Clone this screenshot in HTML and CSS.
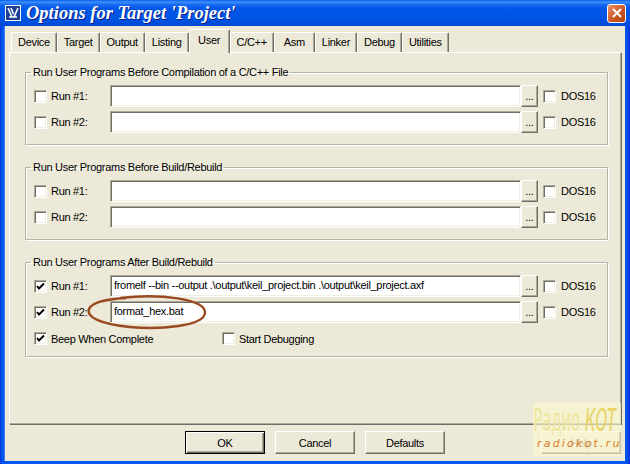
FILE: index.html
```html
<!DOCTYPE html>
<html lang="en">
<head>
  <meta charset="UTF-8" />
  <title>Options for Target 'Project'</title>
  <link rel="stylesheet" href="styles.css">
</head>
<body>

  <div class="window">

    <!-- Title bar -->
    <div class="titlebar">
      <svg class="app-icon" width="16" height="16" viewBox="0 0 16 16">
        <rect x="0.5" y="0.5" width="15" height="15" fill="#1c3f94" stroke="#ffffff" />
        <path d="M3 3 L7 12 M6 3 L8.5 9 M13 3 L9 12 M4 12 H12" stroke="#ffffff" stroke-width="1.6" fill="none" />
      </svg>
      <span class="title">Options for Target 'Project'</span>
      <span class="close-btn">
        <svg width="12" height="12" viewBox="0 0 12 12">
          <path d="M2 2 L10 10 M10 2 L2 10" stroke="#ffffff" stroke-width="2" />
        </svg>
      </span>
    </div>

    <div class="client">

      <!-- Tabs -->
      <ul class="tabs">
        <li>Device</li>
        <li>Target</li>
        <li>Output</li>
        <li>Listing</li>
        <li class="active">User</li>
        <li>C/C++</li>
        <li>Asm</li>
        <li>Linker</li>
        <li>Debug</li>
        <li>Utilities</li>
      </ul>

      <div class="panel">

        <fieldset class="group">
          <legend>Run User Programs Before Compilation of a C/C++ File</legend>
          <div class="row">
            <span class="check"></span><span class="run-label">Run #1:</span>
            <span class="field"></span><span class="browse">...</span>
            <span class="check"></span><span class="dos">DOS16</span>
          </div>
          <div class="row">
            <span class="check"></span><span class="run-label">Run #2:</span>
            <span class="field"></span><span class="browse">...</span>
            <span class="check"></span><span class="dos">DOS16</span>
          </div>
        </fieldset>

        <fieldset class="group">
          <legend>Run User Programs Before Build/Rebuild</legend>
          <div class="row">
            <span class="check"></span><span class="run-label">Run #1:</span>
            <span class="field"></span><span class="browse">...</span>
            <span class="check"></span><span class="dos">DOS16</span>
          </div>
          <div class="row">
            <span class="check"></span><span class="run-label">Run #2:</span>
            <span class="field"></span><span class="browse">...</span>
            <span class="check"></span><span class="dos">DOS16</span>
          </div>
        </fieldset>

        <fieldset class="group">
          <legend>Run User Programs After Build/Rebuild</legend>
          <div class="row">
            <span class="check checked"></span><span class="run-label">Run #1:</span>
            <span class="field">fromelf --bin --output .\output\keil_project.bin .\output\keil_project.axf</span><span class="browse">...</span>
            <span class="check"></span><span class="dos">DOS16</span>
          </div>
          <div class="row">
            <span class="check checked"></span><span class="run-label">Run #2:</span>
            <span class="field">format_hex.bat</span><span class="browse">...</span>
            <span class="check"></span><span class="dos">DOS16</span>
          </div>
          <div class="row options">
            <span class="option"><span class="check checked"></span>Beep When Complete</span>
            <span class="option"><span class="check"></span>Start Debugging</span>
          </div>
        </fieldset>

      </div>

      <!-- Dialog buttons -->
      <div class="buttons">
        <span class="btn default">OK</span>
        <span class="btn">Cancel</span>
        <span class="btn">Defaults</span>
        <span class="btn help">Help</span>
      </div>
    </div>

    <!-- Hand-drawn mark round the second command -->
    <svg class="annotation" width="630" height="464" viewBox="0 0 630 464">
      <path d="M120 298 C160 293 206 299 205 313 C204 326 160 330 130 327 C100 324 86 317 89 309 C92 301 110 299 126 298"
            fill="none" stroke="#9a4a20" stroke-width="2.5" />
    </svg>

    <!-- Site watermark -->
    <div class="watermark">
      <div class="wm-big"><span class="wm-radio">Радио</span> <span class="wm-kot">КОТ</span></div>
      <div class="wm-site">radiokot.ru</div>
    </div>
  </div>

</body>
</html>
```

FILE: styles.css
```css
/* Base */
body {
  margin: 0;
  font-family: 'Liberation Sans', Arial, sans-serif;
  font-size: 11px;
  letter-spacing: -0.3px;
  color: #000;
}

.window {
  position: relative;
  width: 630px;
  height: 464px;
  box-sizing: border-box;
  display: flex;
  flex-direction: column;
  background: linear-gradient(90deg, #0831d9 0, #0058ee 2px, #0058ee 626px, #0831d9 630px);
  overflow: hidden;
}

/* Title bar */
.titlebar {
  height: 26px;
  flex: none;
  display: flex;
  align-items: center;
  padding: 0 5px;
  background: linear-gradient(#0a5ef0 0, #3c8ff8 2px, #1467f0 5px, #0058e8 9px, #0054e3 19px, #0049d4 26px);
  color: #fff;
}

.app-icon {
  flex: none;
  margin-right: 5px;
}

.title {
  font-family: 'Liberation Serif', 'Times New Roman', serif;
  font-style: italic;
  font-weight: bold;
  font-size: 18.5px;
  letter-spacing: 0;
  text-shadow: 1px 1px 0 #0a1e8a;
}

.close-btn {
  margin-left: auto;
  width: 17px;
  height: 17px;
  margin-right: -1px;
  display: flex;
  align-items: center;
  justify-content: center;
  border: 1px solid #fff;
  border-radius: 3px;
  background: linear-gradient(135deg, #e9906a, #c9541f 60%, #b24414);
}

/* Client area */
.client {
  flex: 1;
  margin: 0 5px 3px 4px;
  padding: 3px 4px 0 4px;
  background: #ece9d8;
  border-left: 1px solid #3d7cf2;
}

/* Tabs */
.tabs {
  list-style: none;
  margin: 0 0 0 2px;
  padding: 0;
  display: flex;
  align-items: flex-end;
  height: 23px;
}

.tabs li {
  min-width: 41px;
  height: 20px;
  box-sizing: border-box;
  padding: 0 6px 1px;
  display: flex;
  align-items: center;
  justify-content: center;
  border-top: 1px solid #fff;
  border-left: 1px solid #fff;
  border-right: 1px solid #716f64;
  box-shadow: inset -1px 0 0 #aca899;
  border-radius: 2px 2px 0 0;
}

.tabs li.active {
  position: relative;
  z-index: 1;
  height: 24px;
  margin-bottom: -1px;
  padding-bottom: 4px;
  background: #ece9d8;
}

.panel {
  height: 372px;
  box-sizing: border-box;
  padding: 13px 12px 0 15px;
  border-top: 1px solid #fff;
  border-left: 1px solid #fff;
  border-right: 1px solid #aca899;
  border-bottom: 1px solid #aca899;
  box-shadow: 1px 1px 0 #716f64;
}

/* Group boxes */
.group {
  margin: 0 0 16px;
  padding: 6px 10px 11px 5px;
  border: 1px solid #b8b4a3;
  box-shadow: inset 1px 1px 0 #fff, 1px 1px 0 #fff;
}

.group legend {
  padding: 0 2px;
  line-height: 13px;
}

.row {
  display: flex;
  align-items: center;
  height: 22px;
  margin-left: 3px;
}

.row + .row {
  margin-top: 4px;
}

.check {
  flex: none;
  width: 13px;
  height: 13px;
  box-sizing: border-box;
  background: #fff;
  border-top: 1px solid #aca899;
  border-left: 1px solid #aca899;
  border-bottom: 1px solid #fff;
  border-right: 1px solid #fff;
  box-shadow: inset 1px 1px 0 #716f64, inset -1px -1px 0 #f1efe2;
  margin-right: 4px;
}

.check.checked {
  background: #fff url("data:image/svg+xml;utf8,<svg xmlns='http://www.w3.org/2000/svg' width='11' height='11'><path d='M2 5 L4 7.5 L9 2.5' fill='none' stroke='black' stroke-width='2'/></svg>") no-repeat 0 0;
}

.run-label {
  width: 59px;
}

.field {
  width: 411px;
  height: 22px;
  box-sizing: border-box;
  padding: 0 3px;
  line-height: 18px;
  white-space: nowrap;
  overflow: hidden;
  background: #fff;
  border-top: 1px solid #aca899;
  border-left: 1px solid #aca899;
  border-bottom: 1px solid #fff;
  border-right: 1px solid #fff;
  box-shadow: inset 1px 1px 0 #716f64, inset -1px -1px 0 #f1efe2;
}

.browse {
  width: 17px;
  height: 22px;
  box-sizing: border-box;
  margin-right: 5px;
  text-align: center;
  line-height: 20px;
  border-top: 1px solid #fff;
  border-left: 1px solid #fff;
  border-right: 1px solid #716f64;
  border-bottom: 1px solid #716f64;
  box-shadow: inset -1px -1px 0 #aca899;
}

.dos {
  margin-left: 1px;
}

.row.options {
  height: 13px;
  margin-top: 9px;
}

.option {
  display: flex;
  align-items: center;
  width: 188px;
}

/* Dialog buttons */
.buttons {
  display: flex;
  gap: 10px;
  margin-top: 7px;
  padding-left: 176px;
}

.btn {
  width: 80px;
  height: 23px;
  box-sizing: border-box;
  display: flex;
  align-items: center;
  justify-content: center;
  border-top: 1px solid #fff;
  border-left: 1px solid #fff;
  border-right: 1px solid #716f64;
  border-bottom: 1px solid #716f64;
  box-shadow: inset -1px -1px 0 #aca899;
}

.btn.default {
  border: 1px solid #000;
  box-shadow: inset 1px 1px 0 #fff, inset -1px -1px 0 #716f64, inset -2px -2px 0 #aca899;
}

.btn.help {
  margin-left: auto;
  color: #8a887c;
}

/* Overlays */
.annotation {
  position: absolute;
  left: 0;
  top: 0;
  pointer-events: none;
}

.watermark {
  position: absolute;
  left: 533px;
  top: 403px;
  width: 88px;
  height: 53px;
  background: rgba(252, 250, 205, 0.6);
  letter-spacing: 0;
}

.wm-big {
  height: 34px;
  font-family: 'DejaVu Sans', sans-serif;
  font-size: 20px;
  line-height: 20px;
  white-space: nowrap;
  transform: scale(0.74, 1.6);
  transform-origin: 1px -1px;
}

.wm-radio {
  color: #eee6a0;
}

.wm-kot {
  color: #e8d466;
  font-style: italic;
}

.wm-site {
  padding-left: 4px;
  font-family: 'DejaVu Sans', sans-serif;
  font-style: italic;
  font-size: 11px;
  letter-spacing: 2.2px;
  color: #e07a2a;
}
```
